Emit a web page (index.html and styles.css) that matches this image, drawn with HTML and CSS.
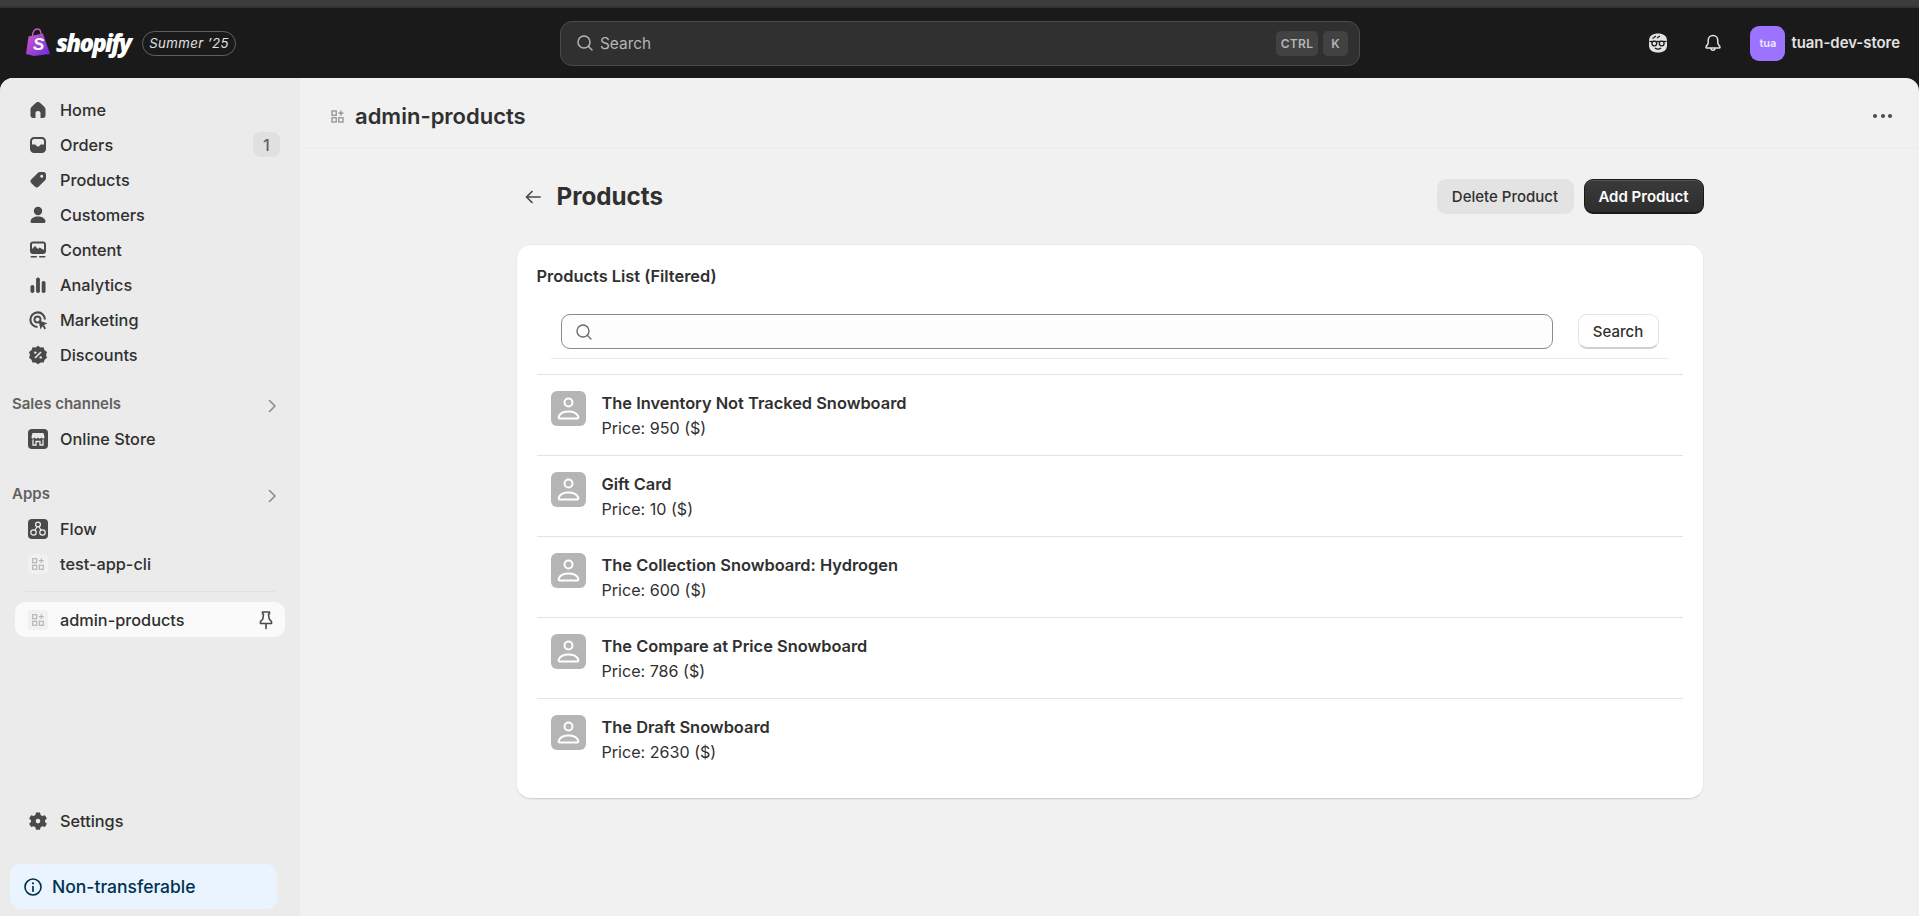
FILE: index.html
```html
<!DOCTYPE html>
<html lang="en">
<head>
  <meta charset="UTF-8">
  <meta name="viewport" content="width=device-width, initial-scale=1.0">
  <title>admin-products</title>
  <link rel="stylesheet" href="styles.css">
</head>
<body>
  <div class="browser-strip"></div>

  <header class="topbar">
    <div class="brand">
      <svg class="brand-bag" viewBox="0 0 24 28" width="24" height="28">
        <defs>
          <linearGradient id="bag" x1="0" y1="0" x2="1" y2="1">
            <stop offset="0" stop-color="#d45ac8"/>
            <stop offset="1" stop-color="#6a2be0"/>
          </linearGradient>
        </defs>
        <path d="M2.500 8.500 L17 5.500 L24 26 L8 28 L0 26 Z" fill="url(#bag)"/>
        <path d="M6.500 8 C6.800 3.500 9 1 11.500 1 C14 1 15 3.500 15 6.500" fill="none" stroke="#c85fc0" stroke-width="1.300"/>
        <text x="7" y="22" class="bag-letter">S</text>
      </svg>
      <span class="brand-name">shopify</span>
      <span class="brand-pill">Summer ’25</span>
    </div>

    <div class="top-search">
      <svg class="icon" viewBox="0 0 20 20" width="20" height="20"><circle cx="9" cy="9" r="6" fill="none" stroke="#b5b5b5" stroke-width="1.500"/><path d="M13.500 13.500 L17 17" stroke="#b5b5b5" stroke-width="1.500" stroke-linecap="round"/></svg>
      <span class="top-search-text">Search</span>
      <span class="kbd">CTRL</span>
      <span class="kbd">K</span>
    </div>

    <div class="top-right">
      <svg class="top-face" viewBox="0 0 20 20" width="20" height="20">
        <path d="M10 .5 C15 .5 19 2.500 19 8 V12.500 C19 17 15.500 19.500 10 19.500 C4.500 19.500 1 17 1 12.500 V8 C1 2.500 5 .5 10 .5 Z" fill="#e3e3e3"/>
        <path d="M4.500 5.500 L8 3 M9 5 L12 3" stroke="#1a1a1a" stroke-width="1.100" fill="none"/>
        <path d="M1.500 8.500 H18.500" stroke="#1a1a1a" stroke-width="1.300"/>
        <circle cx="6.300" cy="10.500" r="2.400" fill="#e3e3e3" stroke="#1a1a1a" stroke-width="1.300"/>
        <circle cx="13.700" cy="10.500" r="2.400" fill="#e3e3e3" stroke="#1a1a1a" stroke-width="1.300"/>
        <path d="M7 15 C9 16.500 11 16.500 13 15" stroke="#1a1a1a" stroke-width="1.400" fill="none"/>
      </svg>
      <svg class="top-bell" viewBox="0 0 20 20" width="20" height="20">
        <path d="M10 2.500 C7 2.500 5.200 4.800 5.200 7.500 V10 C5.200 11.500 3 13 3 14.200 C3 14.800 3.400 15 4 15 H16 C16.600 15 17 14.800 17 14.200 C17 13 14.800 11.500 14.800 10 V7.500 C14.800 4.800 13 2.500 10 2.500 Z M8 15 C8 18 12 18 12 15" fill="none" stroke="#e3e3e3" stroke-width="1.500"/>
      </svg>
      <span class="store-avatar">tua</span>
      <span class="store-name">tuan-dev-store</span>
    </div>
  </header>

  <div class="shell">
    <nav class="sidebar">
      <ul class="nav-list">
        <li class="nav-item">
          <svg class="nav-icon" viewBox="0 0 20 20"><path d="M10 2 C9 2 8.500 2.500 7.500 3.300 L4.500 6 C3 7.300 2.500 8 2.500 9.500 V15.500 C2.500 17 3.500 18 5 18 H7.500 V13 C7.500 11.800 8.500 11 10 11 C11.500 11 12.500 11.800 12.500 13 V18 H15 C16.500 18 17.500 17 17.500 15.500 V9.500 C17.500 8 17 7.300 15.500 6 L12.500 3.300 C11.500 2.500 11 2 10 2 Z"/></svg>
          <span>Home</span>
        </li>
        <li class="nav-item">
          <svg class="nav-icon" viewBox="0 0 20 20"><path fill-rule="evenodd" d="M6 2 H14 C16.200 2 18 3.800 18 6 V14 C18 16.200 16.200 18 14 18 H6 C3.800 18 2 16.200 2 14 V6 C2 3.800 3.800 2 6 2 Z M6 4 C5 4 4 5 4 6 V9.500 H7 C8 9.500 8 11.500 10 11.500 C12 11.500 12 9.500 13 9.500 H16 V6 C16 5 15 4 14 4 Z"/></svg>
          <span>Orders</span>
          <span class="nav-badge">1</span>
        </li>
        <li class="nav-item">
          <svg class="nav-icon" viewBox="0 0 20 20"><path fill-rule="evenodd" d="M12 2 H15.500 C17 2 18 3 18 4.500 V8 C18 9 17.500 9.800 16.800 10.500 L10.500 16.800 C9.500 17.800 8 17.800 7 16.800 L3.200 13 C2.200 12 2.200 10.500 3.200 9.500 L9.500 3.200 C10.200 2.500 11 2 12 2 Z M13.700 4.800 A1.500 1.500 0 1 0 13.710 7.800 A1.500 1.500 0 1 0 13.700 4.800 Z"/></svg>
          <span>Products</span>
        </li>
        <li class="nav-item">
          <svg class="nav-icon" viewBox="0 0 20 20"><circle cx="10" cy="6" r="4.200"/><path d="M10 11.500 C6 11.500 2.800 13.500 2.500 16.200 C2.400 17.300 3.200 18 4 18 H16 C16.800 18 17.600 17.300 17.500 16.200 C17.200 13.500 14 11.500 10 11.500 Z"/></svg>
          <span>Customers</span>
        </li>
        <li class="nav-item">
          <svg class="nav-icon" viewBox="0 0 20 20"><path fill-rule="evenodd" d="M5 1.500 H15 C16.700 1.500 18 2.800 18 4.500 V11 C18 12.700 16.700 14 15 14 H5 C3.300 14 2 12.700 2 11 V4.500 C2 2.800 3.300 1.500 5 1.500 Z M4 9 L7 6 L10 9 L11.500 7.500 L16 10 V4.500 C16 3.900 15.600 3.500 15 3.500 H5 C4.400 3.500 4 3.900 4 4.500 Z"/><rect x="2.500" y="16" width="6.500" height="1.600" rx=".8"/><rect x="11" y="16" width="6.500" height="1.600" rx=".8"/></svg>
          <span>Content</span>
        </li>
        <li class="nav-item">
          <svg class="nav-icon" viewBox="0 0 20 20"><rect x="2.500" y="10" width="3.800" height="8" rx="1.800"/><rect x="8.100" y="2.500" width="3.800" height="15.500" rx="1.800"/><rect x="13.700" y="6" width="3.800" height="12" rx="1.800"/></svg>
          <span>Analytics</span>
        </li>
        <li class="nav-item">
          <svg class="nav-icon" viewBox="0 0 20 20"><path d="M9.500 17 A7.300 7.300 0 1 1 17 9.500" fill="none" stroke="#4a4a4a" stroke-width="2.100"/><circle cx="9.500" cy="9.500" r="3" fill="none" stroke="#4a4a4a" stroke-width="1.900"/><path d="M10.500 10.500 L19.500 13.200 L16 15 L18 18.500 L16.500 19.500 L14.500 16 L12.500 19.500 Z"/></svg>
          <span>Marketing</span>
        </li>
        <li class="nav-item">
          <svg class="nav-icon" viewBox="0 0 20 20"><path d="M10 .8 L12.500 2.500 L15.500 2.300 L16.400 5 L19 7 L18 10 L19 12.800 L16.600 14.700 L15.700 17.500 L12.800 17.600 L10 19.300 L7.400 17.600 L4.400 17.500 L3.500 14.700 L1 12.800 L2 10 L1 7 L3.600 5 L4.500 2.300 L7.500 2.500 Z"/><path d="M7 13 L13 7" stroke="#ebebeb" stroke-width="1.600"/><circle cx="7.300" cy="7.600" r="1.200" fill="#ebebeb"/><circle cx="12.700" cy="12.400" r="1.200" fill="#ebebeb"/></svg>
          <span>Discounts</span>
        </li>
      </ul>

      <div class="nav-heading">
        <span class="nav-heading-text">Sales channels</span>
        <svg class="chevron" viewBox="0 0 20 20"><path d="M7.500 4.500 L13 10 L7.500 15.500" fill="none" stroke="#8a8a8a" stroke-width="1.600" stroke-linecap="round" stroke-linejoin="round"/></svg>
      </div>
      <ul class="nav-list">
        <li class="nav-item">
          <svg class="nav-icon app-icon" viewBox="0 0 20 20"><rect width="20" height="20" rx="4" fill="#4a4a4a"/><path d="M4.500 4 H15.500 L16.500 8 C16.500 10 14 10 13.250 8.500 C12.500 10 11 10 10 8.500 C9 10 7.500 10 6.750 8.500 C6 10 3.500 10 3.500 8 Z" fill="#e8e8e8"/><path d="M5 10.500 V16 H8 V12.500 H12 V16 H15 V10.500" fill="none" stroke="#e8e8e8" stroke-width="1.300"/></svg>
          <span>Online Store</span>
        </li>
      </ul>

      <div class="nav-heading nav-heading-apps">
        <span class="nav-heading-text">Apps</span>
        <svg class="chevron" viewBox="0 0 20 20"><path d="M7.500 4.500 L13 10 L7.500 15.500" fill="none" stroke="#8a8a8a" stroke-width="1.600" stroke-linecap="round" stroke-linejoin="round"/></svg>
      </div>
      <ul class="nav-list">
        <li class="nav-item">
          <svg class="nav-icon app-icon" viewBox="0 0 20 20"><rect width="20" height="20" rx="4" fill="#4a4a4a"/><circle cx="10" cy="5.500" r="2.400" fill="none" stroke="#f1f1f1" stroke-width="1.200"/><circle cx="5.500" cy="13.500" r="2.700" fill="none" stroke="#f1f1f1" stroke-width="1.200"/><circle cx="14.500" cy="13.500" r="2.700" fill="none" stroke="#f1f1f1" stroke-width="1.200"/><path d="M9 8 L7 11 M11 8 L13 11" stroke="#f1f1f1" stroke-width="1.200"/></svg>
          <span>Flow</span>
        </li>
        <li class="nav-item">
          <svg class="nav-icon app-icon" viewBox="0 0 20 20"><use href="#app-tile"/></svg>
          <span>test-app-cli</span>
        </li>
      </ul>
      <div class="nav-sep"></div>
      <div class="nav-item nav-item-pinned">
        <svg class="nav-icon app-icon" viewBox="0 0 20 20">
          <g id="app-tile">
            <rect width="20" height="20" rx="4" fill="#f1f1f1"/>
            <rect x="4.700" y="4.700" width="4" height="4" fill="none" stroke="#b5b5b5" stroke-width="1.200"/>
            <rect x="4.700" y="11.300" width="4" height="4" fill="none" stroke="#b5b5b5" stroke-width="1.200"/>
            <rect x="11.300" y="11.300" width="4" height="4" fill="none" stroke="#b5b5b5" stroke-width="1.200"/>
            <path d="M13.300 4.300 V9 M11 6.700 H15.700" stroke="#b5b5b5" stroke-width="1.200"/>
          </g>
        </svg>
        <span>admin-products</span>
        <svg class="pin" viewBox="0 0 20 20"><path d="M6.500 2 H13.500 V3.700 L12.500 4.300 L13.200 9 L15.500 11.500 V13.500 H4.500 V11.500 L6.800 9 L7.500 4.300 L6.500 3.700 Z M10 13.500 V18.500" fill="none" stroke="#4a4a4a" stroke-width="1.600" stroke-linejoin="round" stroke-linecap="round"/></svg>
      </div>

      <div class="sidebar-bottom">
        <div class="nav-item">
          <svg class="nav-icon" viewBox="0 0 20 20"><path fill-rule="evenodd" d="M8 1.500 H12 L12.600 4 L14.400 5 L16.900 4.300 L18.900 7.500 L17 9.300 V10.900 L18.900 12.700 L16.900 15.900 L14.400 15.200 L12.600 16.200 L12 18.700 H8 L7.400 16.200 L5.600 15.200 L3.100 15.900 L1.100 12.700 L3 10.900 V9.300 L1.100 7.500 L3.100 4.300 L5.600 5 L7.400 4 Z M10 7.800 A2.300 2.300 0 1 0 10.010 12.400 A2.300 2.300 0 1 0 10 7.800 Z"/></svg>
          <span>Settings</span>
        </div>
        <div class="plan-banner">
          <svg class="plan-icon" viewBox="0 0 20 20" width="20" height="20"><circle cx="10" cy="10" r="8" fill="none" stroke="#00324f" stroke-width="1.600"/><circle cx="10" cy="6.300" r="1.100" fill="#00324f"/><path d="M10 9.500 V14.200" stroke="#00324f" stroke-width="1.700" stroke-linecap="round"/></svg>
          <span>Non-transferable</span>
        </div>
      </div>
    </nav>

    <main class="main">
      <div class="app-title-bar">
        <svg class="app-title-icon" viewBox="0 0 20 20" width="17" height="17">
          <rect x="3.500" y="3.500" width="5" height="5" fill="none" stroke="#8a8a8a" stroke-width="1.400"/>
          <rect x="3.500" y="11.500" width="5" height="5" fill="none" stroke="#8a8a8a" stroke-width="1.400"/>
          <rect x="11.500" y="11.500" width="5" height="5" fill="none" stroke="#8a8a8a" stroke-width="1.400"/>
          <path d="M14 3 V9 M11 6 H17" stroke="#8a8a8a" stroke-width="1.400"/>
        </svg>
        <span class="app-title">admin-products</span>
        <span class="more-dots"><i></i><i></i><i></i></span>
      </div>

      <div class="page">
        <div class="page-head">
          <svg class="back" viewBox="0 0 20 20" width="20" height="20"><path d="M17 10 H3.500 M9 4.500 L3.500 10 L9 15.500" fill="none" stroke="#4a4a4a" stroke-width="1.700" stroke-linecap="round" stroke-linejoin="round"/></svg>
          <h1>Products</h1>
          <div class="page-actions">
            <button class="btn btn-grey">Delete Product</button>
            <button class="btn btn-dark">Add Product</button>
          </div>
        </div>

        <section class="card">
          <h2>Products List (Filtered)</h2>
          <div class="filter">
            <div class="filter-input">
              <svg viewBox="0 0 20 20" width="20" height="20"><circle cx="9" cy="9" r="6" fill="none" stroke="#6b6b6b" stroke-width="1.400"/><path d="M13.500 13.500 L17 17" stroke="#6b6b6b" stroke-width="1.400" stroke-linecap="round"/></svg>
            </div>
            <button class="btn btn-white">Search</button>
          </div>

          <ul class="product-list">
            <li class="product">
              <svg class="thumb" viewBox="0 0 35 35"><use href="#thumb-shape"/></svg>
              <div><p class="product-name">The Inventory Not Tracked Snowboard</p><p class="product-price">Price: 950 ($)</p></div>
            </li>
            <li class="product">
              <svg class="thumb" viewBox="0 0 35 35"><use href="#thumb-shape"/></svg>
              <div><p class="product-name">Gift Card</p><p class="product-price">Price: 10 ($)</p></div>
            </li>
            <li class="product">
              <svg class="thumb" viewBox="0 0 35 35"><use href="#thumb-shape"/></svg>
              <div><p class="product-name">The Collection Snowboard: Hydrogen</p><p class="product-price">Price: 600 ($)</p></div>
            </li>
            <li class="product">
              <svg class="thumb" viewBox="0 0 35 35"><use href="#thumb-shape"/></svg>
              <div><p class="product-name">The Compare at Price Snowboard</p><p class="product-price">Price: 786 ($)</p></div>
            </li>
            <li class="product">
              <svg class="thumb" viewBox="0 0 35 35">
                <g id="thumb-shape">
                  <rect width="35" height="35" rx="6" fill="#b5b5b5"/>
                  <circle cx="17.500" cy="11.500" r="4" fill="none" stroke="#fff" stroke-width="2"/>
                  <path d="M8.500 27.500 C7.500 27.500 7.500 26 8 25 C9.500 22 13 20.500 17.500 20.500 C22 20.500 25.500 22 27 25 C27.500 26 27.500 27.500 26.500 27.500 Z" fill="none" stroke="#fff" stroke-width="2" stroke-linejoin="round"/>
                </g>
              </svg>
              <div><p class="product-name">The Draft Snowboard</p><p class="product-price">Price: 2630 ($)</p></div>
            </li>
          </ul>
        </section>
      </div>
    </main>
  </div>
</body>
</html>
```

FILE: styles.css
```css
* { box-sizing: border-box; }
html, body { margin: 0; padding: 0; height: 100%; overflow: hidden; }
body { display: flex; flex-direction: column; font-family: Inter, "Noto Sans", sans-serif; font-size: 16.1px; color: #303030; background: #1a1a1a; }
ul { list-style: none; margin: 0; padding: 0; }
p, h1, h2 { margin: 0; }
button { font-family: inherit; cursor: pointer; }

.browser-strip { height: 8px; background: #3c3c3c; border-bottom: 2px solid #333; flex: none; }

/* top bar */
.topbar { height: 70px; flex: none; display: flex; align-items: center; padding: 0 19px 0 26px; background: #1a1a1a; position: relative; }
.brand { display: flex; align-items: center; width: 534px; }
.brand-bag { display: block; margin-top: -2px; }
.bag-letter { font-family: "Liberation Sans", sans-serif; font-weight: 700; font-style: italic; font-size: 17px; fill: #fff; }
.brand-name { margin-left: 6px; font-family: "Open Sans", sans-serif; font-weight: 800; font-style: italic; font-size: 24px; letter-spacing: -1.800px; color: #fff; line-height: 1; }
.brand-pill { margin-left: 12px; height: 25px; padding: 0 6px; display: flex; align-items: center; border: 1px solid #616161; border-radius: 12.5px; font-size: 13.2px; font-style: italic; color: #e3e3e3; letter-spacing: .4px; white-space: nowrap; }
.top-search { width: 800px; height: 45px; display: flex; align-items: center; gap: 5px; padding: 0 11px 0 14px; background: #303030; border: 1px solid #4a4a4a; border-radius: 12px; }
.top-search-text { flex: 1; color: #b5b5b5; font-size: 15.4px; }
.kbd { height: 25px; padding: 0 5px; display: flex; align-items: center; background: #424242; border-radius: 5px; color: #b5b5b5; font-size: 12px; font-weight: 600; letter-spacing: .3px; }
.kbd + .kbd { padding: 0 8px; }
.top-right { margin-left: auto; display: flex; align-items: center; }
.top-bell { margin-left: 35px; }
.store-avatar { margin-left: 27px; width: 35px; height: 35px; display: flex; align-items: center; justify-content: center; background: #9b73ff; border-radius: 9px; color: #f1e9ff; font-size: 11px; font-weight: 600; }
.store-name { margin-left: 6px; color: #e3e3e3; font-size: 14.9px; font-weight: 600; white-space: nowrap; }

/* shell */
.shell { flex: 1; min-height: 0; display: flex; border-radius: 13px 13px 0 0; overflow: hidden; background: #f1f1f1; }

/* sidebar */
.sidebar { width: 300px; flex: none; display: flex; flex-direction: column; padding: 14px 0 7px; background: #ebebeb; }
.nav-item { height: 35px; display: flex; align-items: center; padding: 0 20px 0 28px; font-size: 16.3px; font-weight: 500; }
.nav-item > span:first-of-type { flex: 1; }
.nav-icon { width: 20px; height: 20px; margin-right: 12px; flex: none; fill: #4a4a4a; }
.nav-badge { width: 27px; height: 25px; flex: none; display: flex; align-items: center; justify-content: center; background: #e0e0e0; border-radius: 8px; color: #616161; font-weight: 500; }
.nav-heading { height: 30px; margin-top: 19px; display: flex; align-items: center; justify-content: space-between; padding: 0 18px 0 12px; color: #616161; font-size: 15px; font-weight: 600; }
.nav-heading-text { margin-top: -5px; }
.nav-heading-apps { margin-top: 25px; }
.chevron { width: 20px; height: 20px; }
.nav-sep { height: 1px; margin: 10px 25px; background: #e0e0e0; }
.nav-item-pinned { width: 270px; margin-left: 15px; padding: 0 9px 0 13px; background: #fafafa; border-radius: 10px; }
.pin { width: 20px; height: 20px; flex: none; }
.sidebar-bottom { margin-top: auto; }
.plan-banner { width: 267px; height: 45px; margin: 26px 0 0 10px; padding: 0 13px; display: flex; align-items: center; gap: 9px; background: #eaf4ff; border-radius: 11px; color: #00324f; font-size: 17.5px; font-weight: 500; }

/* main */
.main { flex: 1; min-width: 0; display: flex; flex-direction: column; }
.app-title-bar { height: 71px; flex: none; display: flex; align-items: center; padding: 6px 27px 0 29px; border-bottom: 1px solid #ebebeb; }
.app-title { margin-left: 9px; font-size: 22px; font-weight: 600; color: #303030; }
.more-dots { margin-left: auto; display: flex; gap: 3.500px; }
.more-dots i { width: 4px; height: 4px; border-radius: 50%; background: #4a4a4a; }
.page { width: 1188px; margin: 0 auto; flex: 1; }
.page-head { display: flex; align-items: center; height: 35px; margin-top: 30px; padding-left: 7px; }
.back { margin-right: 14px; }
.page-head h1 { font-size: 24.200px; font-weight: 700; color: #303030; }
.page-actions { margin-left: auto; display: flex; gap: 10px; }
.btn { height: 35px; padding: 0; border: 0; border-radius: 9px; font-size: 15px; font-weight: 600; }
.btn-grey { width: 137px; background: #e3e3e3; color: #303030; font-weight: 500; }
.btn-dark { width: 120px; background: linear-gradient(#3a3a3a, #2e2e2e); color: #fff; border: 1px solid #1a1a1a; border-bottom-width: 2px; box-shadow: inset 0 1px 0 #555; }
.btn-white { background: #fff; color: #303030; border: 1px solid #e3e3e3; border-bottom: 2px solid #d0d0d0; font-weight: 500; }

.card { margin-top: 30px; height: 555px; padding: 20px 20px 0; background: #fff; border: 1px solid #ebebeb; border-bottom-color: #d4d4d4; border-radius: 15px; box-shadow: 0 1px 1px rgba(0,0,0,.05); }
.card h2 { font-size: 16.4px; line-height: 22px; font-weight: 600; color: #303030; }
.filter { height: 45px; margin: 27px 14px 0 14px; display: flex; gap: 25px; padding: 0 10px; border-bottom: 1px solid #ebebeb; align-items: flex-start; }
.filter-input { flex: 1; height: 35px; display: flex; align-items: center; padding-left: 12px; background: #fdfdfd; border: 1px solid #8a8a8a; border-radius: 9px; }
.filter .btn { width: 81px; flex: none; }

.product-list { margin-top: 15px; }
.product { height: 81px; display: flex; gap: 16px; padding: 16px 14px 0; border-top: 1px solid #e3e3e3; }
.thumb { width: 35px; height: 35px; flex: none; }
.product-name { font-size: 16.4px; font-weight: 600; line-height: 25px; color: #303030; }
.product-price { line-height: 25px; color: #303030; }
```
